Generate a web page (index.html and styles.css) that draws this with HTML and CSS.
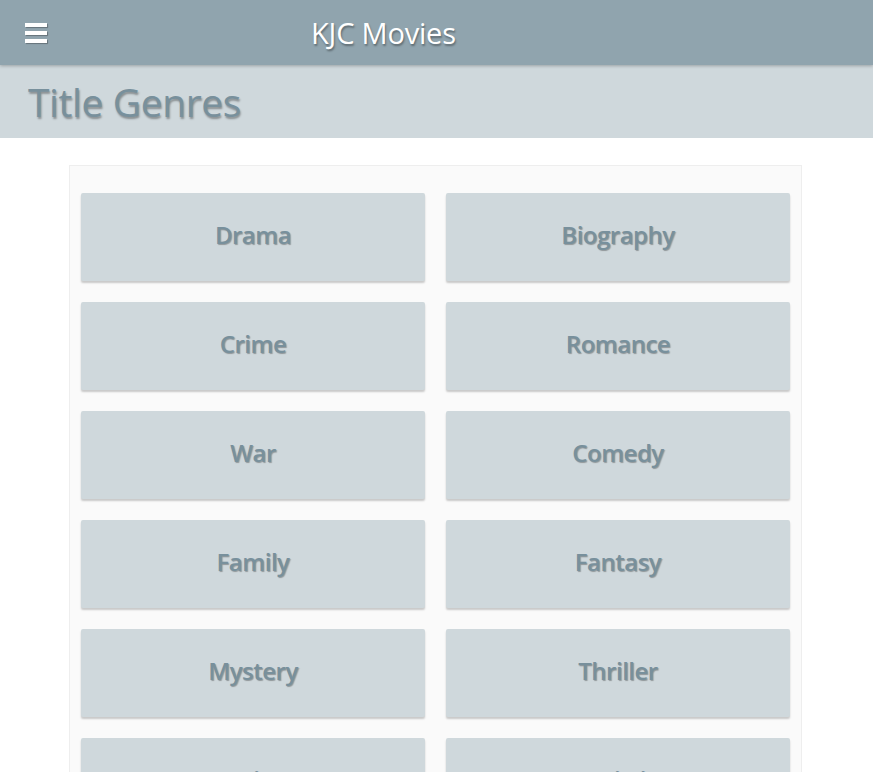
FILE: index.html
```html
<!DOCTYPE html>
<html>
<head>
<meta charset="utf-8">
<link rel="stylesheet" href="styles.css">
</head>
<body>
<header class="topbar">
  <button class="menu" aria-label="menu">
    <span></span><span></span><span></span>
  </button>
  <div class="brand">KJC Movies</div>
</header>
<div class="titlebar"><h1>Title Genres</h1></div>
<main class="panel">
  <div class="grid">
    <div class="genre">Drama</div>
    <div class="genre">Biography</div>
    <div class="genre">Crime</div>
    <div class="genre">Romance</div>
    <div class="genre">War</div>
    <div class="genre">Comedy</div>
    <div class="genre">Family</div>
    <div class="genre">Fantasy</div>
    <div class="genre">Mystery</div>
    <div class="genre">Thriller</div>
    <div class="genre">Action</div>
    <div class="genre">Sci-Fi</div>
  </div>
</main>
</body>
</html>
```
FILE: styles.css
```css
html, body {
  margin: 0;
  padding: 0;
  background: #ffffff;
  font-family: "Open Sans", "Noto Sans", sans-serif;
  overflow: hidden;
}
.topbar {
  height: 65px;
  background: #90a4ae;
  display: flex;
  align-items: center;
  box-shadow: 0 1px 3px rgba(0,0,0,0.25);
  position: relative;
  z-index: 2;
}
.menu {
  background: none;
  border: 0;
  padding: 0;
  margin-left: 25px;
  width: 22px;
  display: flex;
  flex-direction: column;
  gap: 4px;
}
.menu span {
  display: block;
  height: 4px;
  width: 22px;
  background: #fff;
  box-shadow: 1px 1px 1px rgba(0,0,0,0.3);
}
.brand {
  margin-left: 264px;
  color: #fff;
  font-size: 29px;
  text-shadow: 1px 2px 2px rgba(0,0,0,0.35);
  letter-spacing: -0.2px;
}
.titlebar {
  height: 73px;
  background: #cfd8dc;
  display: flex;
  align-items: center;
}
.titlebar h1 {
  margin: 0 0 0 28px;
  font-size: 39px;
  font-weight: 400;
  color: #78909c;
  text-shadow: 1px 2px 2px rgba(0,0,0,0.35);
  letter-spacing: -0.4px;
}
.panel {
  margin: 27px 71px 0 69px;
  background: #fafafa;
  border: 1px solid #eeeeee;
  border-bottom: 0;
  padding: 27px 11px 0 11px;
}
.grid {
  display: grid;
  grid-template-columns: 1fr 1fr;
  column-gap: 21px;
  row-gap: 21px;
}
.genre {
  height: 88px;
  box-sizing: border-box;
  padding-bottom: 6px;
  background: #cfd8dc;
  border-radius: 2px;
  box-shadow: 0 2px 2px rgba(0,0,0,0.2);
  display: flex;
  align-items: center;
  justify-content: center;
  color: #78909c;
  font-size: 24px;
  font-weight: 600;
  text-shadow: 1px 1px 1px rgba(0,0,0,0.3);
  letter-spacing: -0.5px;
}
```
